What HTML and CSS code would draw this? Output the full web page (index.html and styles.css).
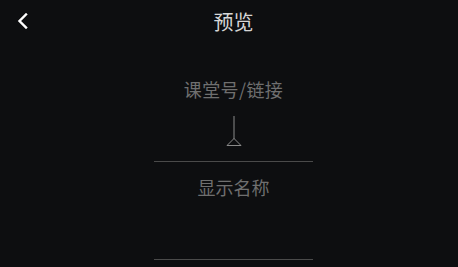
FILE: index.html
```html
<!DOCTYPE html>
<html lang="zh">
<head>
    <meta charset="UTF-8">
    <meta name="viewport" content="width=device-width, initial-scale=1.0">
    <title>预览</title>
    <link rel="stylesheet" href="styles.css">
</head>
<body>

    <!-- TOP BAR -->
    <header class="top-bar">
        <span class="back-btn">
            <svg width="12" height="16" viewBox="0 0 12 16">
                <path d="M9 1.5 L2.5 8 L9 14.5" fill="none" stroke="#ffffff" stroke-width="2.4" stroke-linecap="square"/>
            </svg>
        </span>
        <h1 class="page-title">预览</h1>
    </header>

    <!-- FORM -->
    <main class="form">
        <div class="field field-code">
            <p class="placeholder">课堂号/链接</p>
            <div class="cursor">
                <svg width="16" height="31" viewBox="0 0 16 31">
                    <line x1="8" y1="0" x2="8" y2="23" stroke="#8a8a8a" stroke-width="1"/>
                    <path d="M8 22.5 L1 29.5 L15 29.5 Z" fill="none" stroke="#8a8a8a" stroke-width="1"/>
                </svg>
            </div>
        </div>
        <div class="field field-name">
            <p class="placeholder">显示名称</p>
        </div>
    </main>

</body>
</html>
```

FILE: styles.css
```css
/* GENERAL */
* {
    margin: 0;
    padding: 0;
    box-sizing: border-box;
    font-family: "Noto Sans CJK SC", "Noto Sans", sans-serif;
}

body {
    background-color: #0d0e10;
    width: 458px;
    height: 267px;
    overflow: hidden;
}

/* TOP BAR */
.top-bar {
    height: 44px;
    display: flex;
    align-items: center;
    position: relative;
}

.back-btn {
    position: absolute;
    left: 17px;
    top: 13px;
    display: flex;
}

.page-title {
    width: 100%;
    padding-left: 9px; /* title sits a little right of centre */
    text-align: center;
    font-size: 20px;
    font-weight: normal;
    line-height: 44px;
    color: #d6d6d6;
}

/* FORM */
.form {
    width: 159px;
    margin-left: 154px;
}

.field {
    border-bottom: 1px solid #4a4a4a;
    text-align: center;
}

.placeholder {
    font-size: 18px;
    line-height: 24px;
    color: #6f6f6f;
}

.field-code .placeholder {
    letter-spacing: 0.4px;
}

.field-code {
    padding-top: 33px;
    padding-bottom: 14px;
}

.cursor {
    margin-top: 15px;
    height: 31px;
    display: flex;
    justify-content: center;
}

.field-name {
    padding-top: 13px;
    padding-bottom: 60px;
}
```
